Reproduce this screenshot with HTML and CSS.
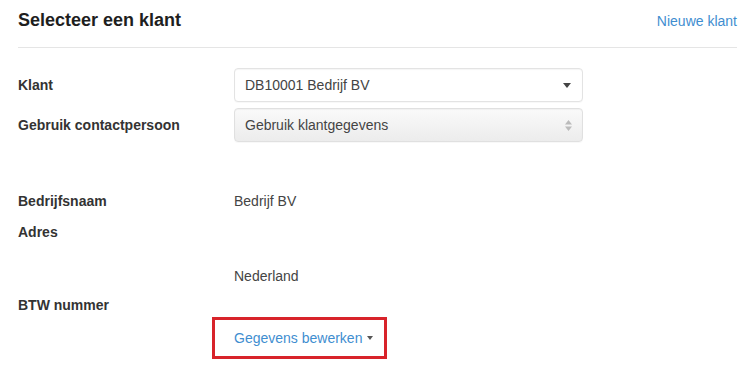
FILE: index.html
```html
<!DOCTYPE html>
<html lang="nl">
<head>
    <meta charset="UTF-8">
    <meta name="viewport" content="width=device-width, initial-scale=1.0">
    <title>Selecteer een klant</title>
    <link rel="stylesheet" href="styles.css">
</head>
<body>
    <div class="page">
        <div class="header">
            <h2 class="title">Selecteer een klant</h2>
            <a class="link" href="#">Nieuwe klant</a>
        </div>

        <div class="form">
            <div class="form-row">
                <label class="label">Klant</label>
                <div class="select">
                    <span>DB10001 Bedrijf BV</span>
                    <svg class="caret" width="8" height="5" viewBox="0 0 8 5"><path d="M0 0h8L4 5z" fill="#444"/></svg>
                </div>
            </div>
            <div class="form-row">
                <label class="label">Gebruik contactpersoon</label>
                <div class="select select-native">
                    <span>Gebruik klantgegevens</span>
                    <svg class="updown" width="7" height="11" viewBox="0 0 7 11"><path d="M0 4.5L3.5 0 7 4.5z M0 6.5h7L3.5 11z" fill="#bbb"/></svg>
                </div>
            </div>
        </div>

        <div class="info">
            <div class="info-row">
                <div class="label">Bedrijfsnaam</div>
                <div class="value">Bedrijf BV</div>
            </div>
            <div class="info-row address">
                <div class="label">Adres</div>
                <div class="value"><br><br>Nederland</div>
            </div>
            <div class="info-row">
                <div class="label">BTW nummer</div>
                <div class="value"></div>
            </div>
        </div>

        <div class="edit-box">
            <a class="link" href="#">Gegevens bewerken</a><span class="small-caret"></span>
        </div>
    </div>
</body>
</html>
```

FILE: styles.css
```css
body{
    margin: 0;
    background: #fff;
    font-family: "Liberation Sans", Arial, sans-serif;
    font-size: 14px;
    color: #333;
}

.page{
    padding: 0 12px 0 18px;
}

.header{
    display: flex;
    justify-content: space-between;
    align-items: baseline;
    padding: 10px 0 16px;
    border-bottom: 1px solid #e5e5e5;
    line-height: 20px;
}

.title{
    margin: 0;
    font-size: 18px;
    font-weight: bold;
    color: #1e1e1e;
}

.link{
    color: #3f8ed0;
    text-decoration: none;
    font-size: 14px;
}

/* form with the two selects */
.form{
    margin-top: 20px;
}

.form-row{
    display: flex;
    align-items: center;
    margin-bottom: 6px;
}

.label{
    width: 216px;
    flex: none;
    font-weight: bold;
    color: #333;
    line-height: 20px;
}

.select{
    width: 349px;
    height: 34px;
    box-sizing: border-box;
    display: flex;
    align-items: center;
    justify-content: space-between;
    padding: 0 11px 0 10px;
    border: 1px solid #e3e3e3;
    border-radius: 4px;
    background: #fff;
    box-shadow: inset 0 1px 1px rgba(0,0,0,0.04), 0 1px 1px rgba(0,0,0,0.03);
    color: #444;
}

.select-native{
    background: linear-gradient(#fafafa, #ececec);
    border-color: #e0e0e0;
    padding-right: 10px;
}

.caret{
    display: block;
}

.updown{
    display: block;
}

/* info lines */
.info{
    margin-top: 49px;
}

.info-row{
    display: flex;
    margin-bottom: 10px;
}

.value{
    line-height: 20px;
    color: #444;
}

.info-row.address{
    margin-bottom: 8px;
}

.info-row.address .label,
.info-row.address .value{
    line-height: 22px;
}

.edit-box{
    display: inline-flex;
    align-items: center;
    margin: -8px 0 0 194px;
    width: 175px;
    height: 42px;
    box-sizing: border-box;
    padding-left: 19px;
    border: 3px solid #d8232a;
}

.small-caret{
    display: inline-block;
    margin-left: 5px;
    border-top: 4px solid #555;
    border-left: 3px solid transparent;
    border-right: 3px solid transparent;
}
```
